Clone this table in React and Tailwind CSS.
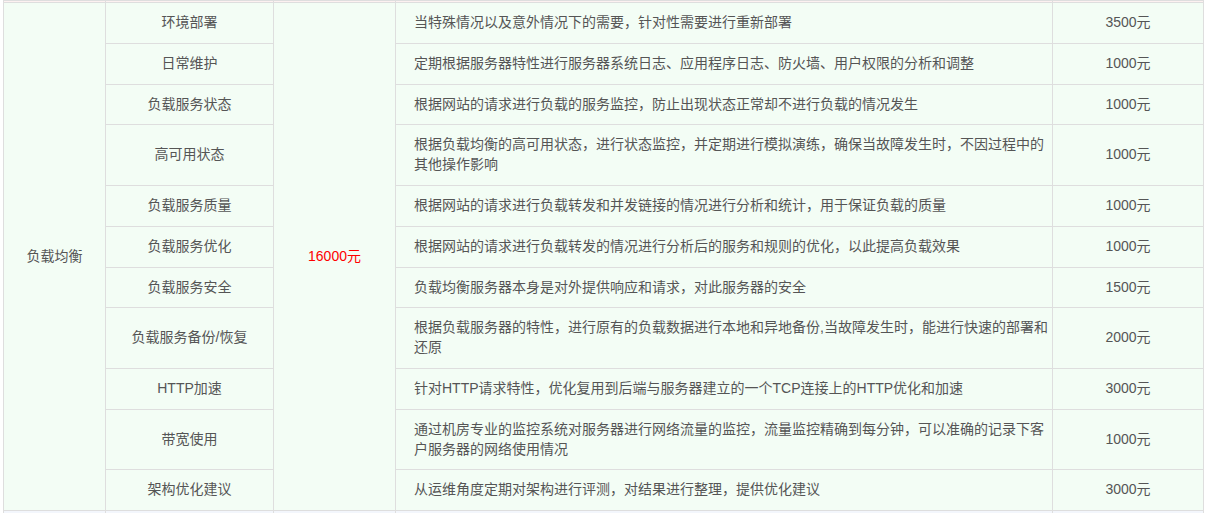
const rows = [
  { name: '环境部署', desc: '当特殊情况以及意外情况下的需要，针对性需要进行重新部署', price: '3500元' },
  { name: '日常维护', desc: '定期根据服务器特性进行服务器系统日志、应用程序日志、防火墙、用户权限的分析和调整', price: '1000元' },
  { name: '负载服务状态', desc: '根据网站的请求进行负载的服务监控，防止出现状态正常却不进行负载的情况发生', price: '1000元' },
  { name: '高可用状态', desc: '根据负载均衡的高可用状态，进行状态监控，并定期进行模拟演练，确保当故障发生时，不因过程中的其他操作影响', price: '1000元' },
  { name: '负载服务质量', desc: '根据网站的请求进行负载转发和并发链接的情况进行分析和统计，用于保证负载的质量', price: '1000元' },
  { name: '负载服务优化', desc: '根据网站的请求进行负载转发的情况进行分析后的服务和规则的优化，以此提高负载效果', price: '1000元' },
  { name: '负载服务安全', desc: '负载均衡服务器本身是对外提供响应和请求，对此服务器的安全', price: '1500元' },
  { name: '负载服务备份/恢复', desc: '根据负载服务器的特性，进行原有的负载数据进行本地和异地备份,当故障发生时，能进行快速的部署和还原', price: '2000元' },
  { name: 'HTTP加速', desc: '针对HTTP请求特性，优化复用到后端与服务器建立的一个TCP连接上的HTTP优化和加速', price: '3000元' },
  { name: '带宽使用', desc: '通过机房专业的监控系统对服务器进行网络流量的监控，流量监控精确到每分钟，可以准确的记录下客户服务器的网络使用情况', price: '1000元' },
  { name: '架构优化建议', desc: '从运维角度定期对架构进行评测，对结果进行整理，提供优化建议', price: '3000元' },
]

const cell = 'border border-[#dedede] py-[10px] leading-[19.8px]'

export default function App() {
  return (
    <div
      className="h-[513px] w-[1209px] overflow-hidden bg-white text-[14px] text-[#555]"
      style={{ fontFamily: '"Liberation Sans", "Noto Sans CJK SC", sans-serif' }}
    >
      <table className="ml-[3px] w-[1200px] table-fixed border-collapse">
        <colgroup>
          <col className="w-[102px]" />
          <col className="w-[168px]" />
          <col className="w-[122px]" />
          <col className="w-[657px]" />
          <col className="w-[151px]" />
        </colgroup>
        <tbody>
          {/* tail of the row above */}
          <tr className="h-[2px] bg-[#fdf1f1]">
            <td className="border border-[#dedede] p-0" />
            <td className="border border-[#dedede] p-0" />
            <td className="border border-[#dedede] p-0" />
            <td className="border border-[#dedede] p-0" />
            <td className="border border-[#dedede] p-0" />
          </tr>
          {rows.map((r, i) => (
            <tr key={r.name} className="bg-[#f3fdf5]">
              {i === 0 && (
                <td rowSpan={rows.length} className={`${cell} text-center`}>
                  负载均衡
                </td>
              )}
              <td className={`${cell} text-center`}>{r.name}</td>
              {i === 0 && (
                <td rowSpan={rows.length} className={`${cell} text-center text-[#ff0000]`}>
                  16000元
                </td>
              )}
              <td className={`${cell} pl-[18px] pr-0 text-left`}>{r.desc}</td>
              <td className={`${cell} text-center`}>{r.price}</td>
            </tr>
          ))}
          {/* head of the next row */}
          <tr className="h-[20px] bg-[#f3f6fc]">
            <td className="border border-[#dedede] p-0" />
            <td className="border border-[#dedede] p-0" />
            <td className="border border-[#dedede] p-0" />
            <td className="border border-[#dedede] p-0" />
            <td className="border border-[#dedede] p-0" />
          </tr>
        </tbody>
      </table>
    </div>
  )
}
